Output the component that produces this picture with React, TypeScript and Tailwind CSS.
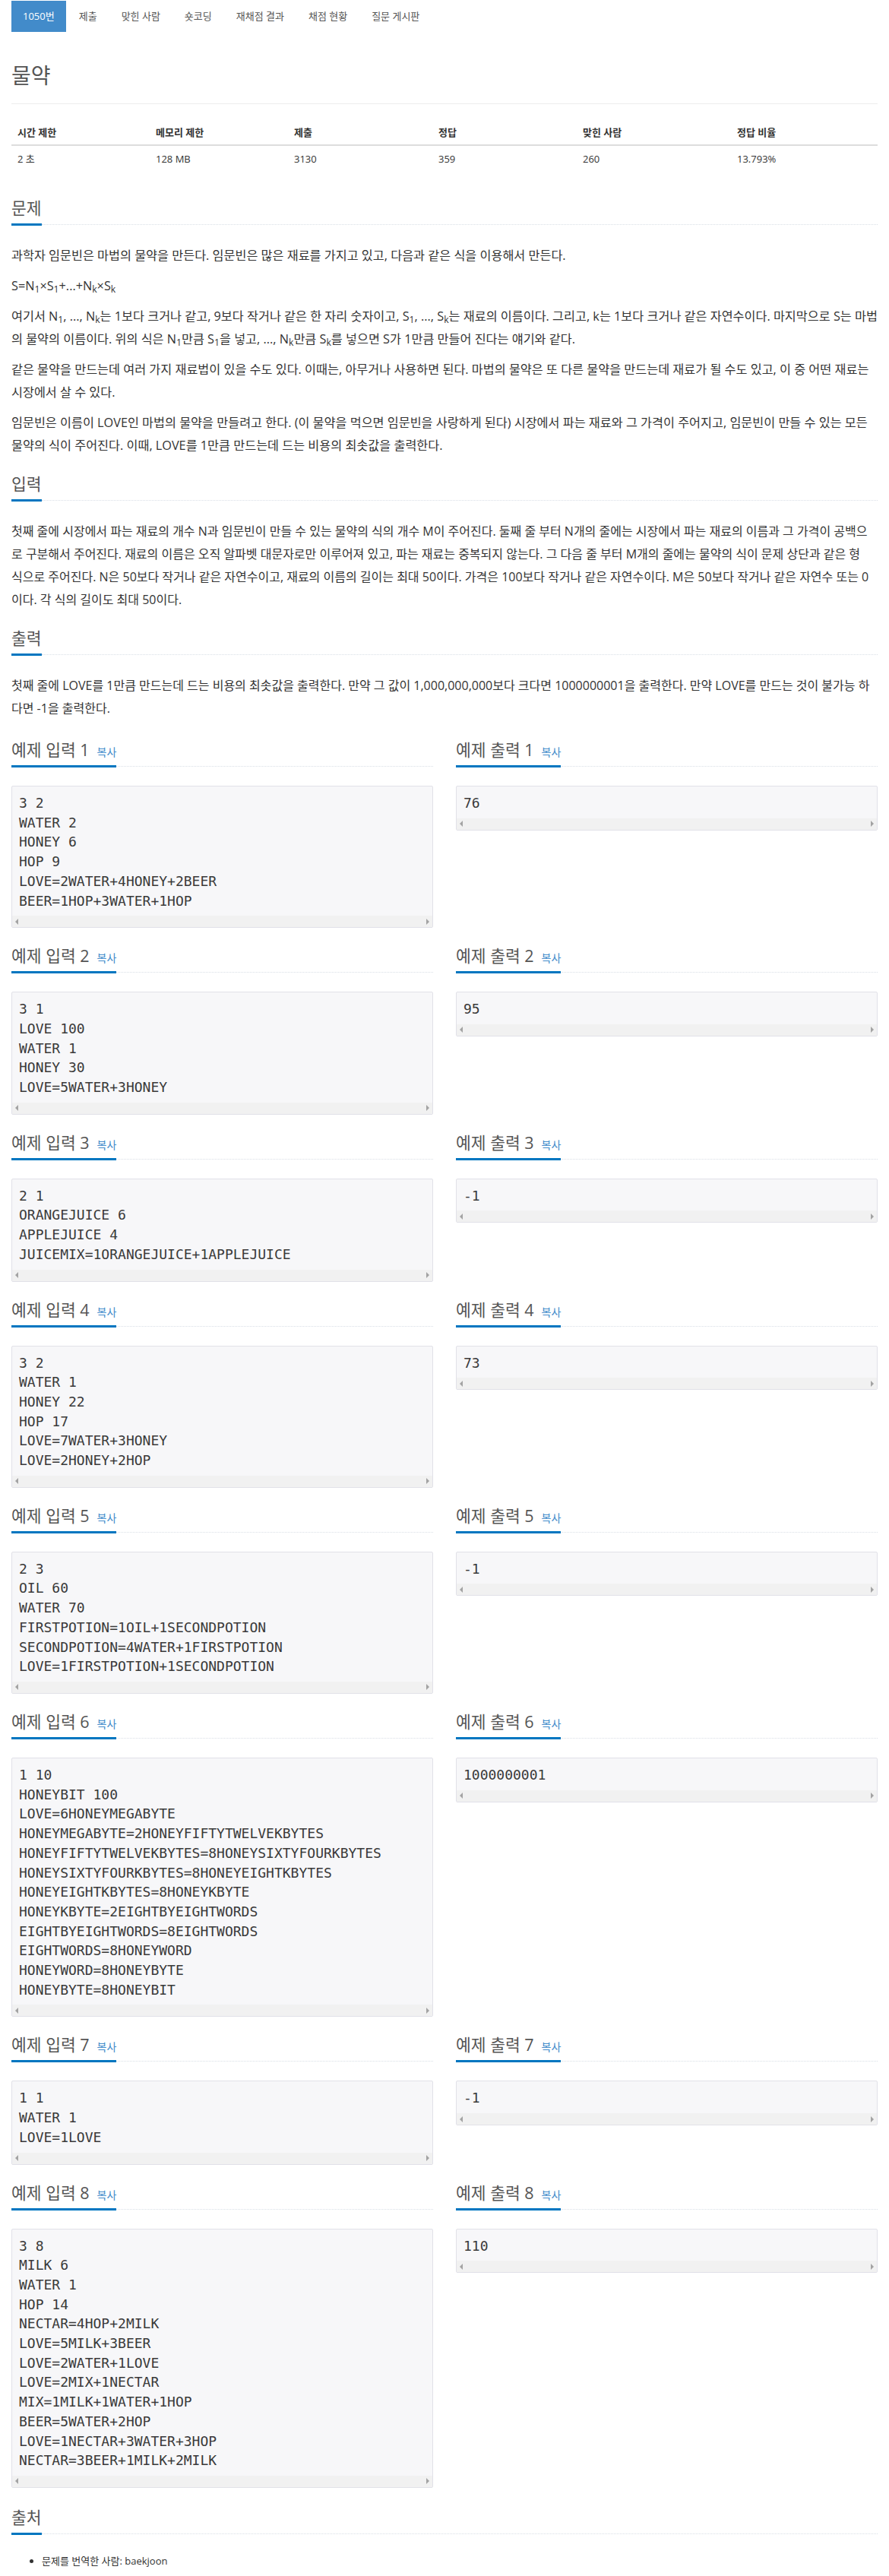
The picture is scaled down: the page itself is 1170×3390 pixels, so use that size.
import React from 'react';

const tabs = ['1050번', '제출', '맞힌 사람', '숏코딩', '재채점 결과', '채점 현황', '질문 게시판'];

const info = [
  { label: '시간 제한', value: '2 초', w: 'w-[182px]' },
  { label: '메모리 제한', value: '128 MB', w: 'w-[182px]' },
  { label: '제출', value: '3130', w: 'w-[190px]' },
  { label: '정답', value: '359', w: 'w-[190px]' },
  { label: '맞힌 사람', value: '260', w: 'w-[203px]' },
  { label: '정답 비율', value: '13.793%', w: '' },
];

const samples = [
  {
    input: '3 2\nWATER 2\nHONEY 6\nHOP 9\nLOVE=2WATER+4HONEY+2BEER\nBEER=1HOP+3WATER+1HOP',
    output: '76',
  },
  {
    input: '3 1\nLOVE 100\nWATER 1\nHONEY 30\nLOVE=5WATER+3HONEY',
    output: '95',
  },
  {
    input: '2 1\nORANGEJUICE 6\nAPPLEJUICE 4\nJUICEMIX=1ORANGEJUICE+1APPLEJUICE',
    output: '-1',
  },
  {
    input: '3 2\nWATER 1\nHONEY 22\nHOP 17\nLOVE=7WATER+3HONEY\nLOVE=2HONEY+2HOP',
    output: '73',
  },
  {
    input:
      '2 3\nOIL 60\nWATER 70\nFIRSTPOTION=1OIL+1SECONDPOTION\nSECONDPOTION=4WATER+1FIRSTPOTION\nLOVE=1FIRSTPOTION+1SECONDPOTION',
    output: '-1',
  },
  {
    input:
      '1 10\nHONEYBIT 100\nLOVE=6HONEYMEGABYTE\nHONEYMEGABYTE=2HONEYFIFTYTWELVEKBYTES\nHONEYFIFTYTWELVEKBYTES=8HONEYSIXTYFOURKBYTES\nHONEYSIXTYFOURKBYTES=8HONEYEIGHTKBYTES\nHONEYEIGHTKBYTES=8HONEYKBYTE\nHONEYKBYTE=2EIGHTBYEIGHTWORDS\nEIGHTBYEIGHTWORDS=8EIGHTWORDS\nEIGHTWORDS=8HONEYWORD\nHONEYWORD=8HONEYBYTE\nHONEYBYTE=8HONEYBIT',
    output: '1000000001',
  },
  {
    input: '1 1\nWATER 1\nLOVE=1LOVE',
    output: '-1',
  },
  {
    input:
      '3 8\nMILK 6\nWATER 1\nHOP 14\nNECTAR=4HOP+2MILK\nLOVE=5MILK+3BEER\nLOVE=2WATER+1LOVE\nLOVE=2MIX+1NECTAR\nMIX=1MILK+1WATER+1HOP\nBEER=5WATER+2HOP\nLOVE=1NECTAR+3WATER+3HOP\nNECTAR=3BEER+1MILK+2MILK',
    output: '110',
  },
];

function Headline({ children }: { children: React.ReactNode }) {
  return (
    <div className="flex items-end mb-[24px]">
      <h2 className="text-[21.5px] leading-[22px] pb-[9px] border-b-[3px] border-[#0076c0] font-normal text-[#555] whitespace-nowrap">
        {children}
      </h2>
      <div className="flex-1 border-b border-dotted border-[#d9dfe6] mb-[1px]" />
    </div>
  );
}

function SampleBox({ text }: { text: string }) {
  return (
    <div className="border border-[#e1e1e8] bg-[#f7f7f9] rounded-[2px] overflow-hidden">
      <pre className="pt-[9px] pb-[7px] px-[9px] text-[18px] leading-[25.7px] text-[#3a3a3a] font-['DejaVu_Sans_Mono',monospace] whitespace-pre overflow-hidden">
        {text}
      </pre>
      {/* fake horizontal scrollbar */}
      <div className="h-[15px] bg-[#f1f1f1] flex items-center justify-between px-[4px]">
        <span className="w-0 h-0 border-y-[4px] border-y-transparent border-r-[4px] border-r-[#a3a3a3]" />
        <span className="w-0 h-0 border-y-[4px] border-y-transparent border-l-[4px] border-l-[#a3a3a3]" />
      </div>
    </div>
  );
}

export default function App() {
  return (
    <div className="w-[1170px] px-[15px] bg-white text-[#333] font-['Open_Sans','Noto_Sans_CJK_KR',sans-serif]">
      {/* tabs */}
      <ul className="flex gap-[2px] mt-[1px]">
        {tabs.map((t, i) => (
          <li
            key={t}
            className={`px-[15px] h-[41px] leading-[41px] text-[13px] ${
              i === 0 ? 'bg-[#428bca] text-white' : 'text-[#555]'
            }`}
          >
            {t}
          </li>
        ))}
      </ul>

      {/* title */}
      <div className="mt-[42px] pb-[21px] border-b border-[#eee]">
        <h1 className="text-[28px] leading-[31px] font-normal text-[#555]">물약</h1>
      </div>

      {/* problem info */}
      <table className="w-full table-fixed mt-[20px] text-[13px] leading-[20px] border-collapse">
        <thead>
          <tr>
            {info.map((c) => (
              <th key={c.label} className={`${c.w} px-[8px] py-[6.5px] text-left font-bold border-b-2 border-[#ddd]`}>
                {c.label}
              </th>
            ))}
          </tr>
        </thead>
        <tbody>
          <tr>
            {info.map((c) => (
              <td key={c.label} className="px-[8px] py-[6.5px]">
                {c.value}
              </td>
            ))}
          </tr>
        </tbody>
      </table>

      {/* 문제 */}
      <section className="mt-[38px] pb-[15px]">
        <Headline>문제</Headline>
        <div className="text-[16.25px] leading-[30px]">
          <p className="mb-[10px]">
            과학자 임문빈은 마법의 물약을 만든다. 임문빈은 많은 재료를 가지고 있고, 다음과 같은 식을 이용해서 만든다.
          </p>
          <p className="mb-[10px]">
            S=N<sub>1</sub>×S<sub>1</sub>+...+N<sub>k</sub>×S<sub>k</sub>
          </p>
          <p className="mb-[10px]">
            여기서 N<sub>1</sub>, ..., N<sub>k</sub>는 1보다 크거나 같고, 9보다 작거나 같은 한 자리 숫자이고, S
            <sub>1</sub>, ..., S<sub>k</sub>는 재료의 이름이다. 그리고, k는 1보다 크거나 같은 자연수이다. 마지막으로
            S는 마법의 물약의 이름이다. 위의 식은 N<sub>1</sub>만큼 S<sub>1</sub>을 넣고, ..., N<sub>k</sub>만큼 S
            <sub>k</sub>를 넣으면 S가 1만큼 만들어 진다는 얘기와 같다.
          </p>
          <p className="mb-[10px]">
            같은 물약을 만드는데 여러 가지 재료법이 있을 수도 있다. 이때는, 아무거나 사용하면 된다. 마법의 물약은 또
            다른 물약을 만드는데 재료가 될 수도 있고, 이 중 어떤 재료는 시장에서 살 수 있다.
          </p>
          <p className="mb-[10px]">
            임문빈은 이름이 LOVE인 마법의 물약을 만들려고 한다. (이 물약을 먹으면 임문빈을 사랑하게 된다) 시장에서 파는
            재료와 그 가격이 주어지고, 임문빈이 만들 수 있는 모든 물약의 식이 주어진다. 이때, LOVE를 1만큼 만드는데
            드는 비용의 최솟값을 출력한다.
          </p>
        </div>
      </section>

      {/* 입력 */}
      <section className="pb-[15px]">
        <Headline>입력</Headline>
        <p className="text-[16px] leading-[30px] mb-[10px]">
          첫째 줄에 시장에서 파는 재료의 개수 N과 임문빈이 만들 수 있는 물약의 식의 개수 M이 주어진다. 둘째 줄 부터
          N개의 줄에는 시장에서 파는 재료의 이름과 그 가격이 공백으로 구분해서 주어진다. 재료의 이름은 오직 알파벳
          대문자로만 이루어져 있고, 파는 재료는 중복되지 않는다. 그 다음 줄 부터 M개의 줄에는 물약의 식이 문제 상단과
          같은 형<br />식으로 주어진다. N은 50보다 작거나 같은 자연수이고, 재료의 이름의 길이는 최대 50이다. 가격은
          100보다 작거나 같은 자연수이다. M은 50보다 작거나 같은 자연수 또는 0<br />이다. 각 식의 길이도 최대 50이다.
        </p>
      </section>

      {/* 출력 */}
      <section className="pb-[19px]">
        <Headline>출력</Headline>
        <p className="text-[16px] leading-[30px] mb-[10px]">
          첫째 줄에 LOVE를 1만큼 만드는데 드는 비용의 최솟값을 출력한다. 만약 그 값이 1,000,000,000보다 크다면
          1000000001을 출력한다. 만약 LOVE를 만드는 것이 불가능 하다면 -1을 출력한다.
        </p>
      </section>

      {/* samples */}
      <div className="grid grid-cols-2 gap-x-[30px] gap-y-[26px] items-start">
        {samples.map((s, i) => (
          <React.Fragment key={i}>
            <div>
              <Headline>
                예제 입력 {i + 1}
                <span className="ml-[10px] text-[14px] leading-none text-[#428bca]">복사</span>
              </Headline>
              <SampleBox text={s.input} />
            </div>
            <div>
              <Headline>
                예제 출력 {i + 1}
                <span className="ml-[10px] text-[14px] leading-none text-[#428bca]">복사</span>
              </Headline>
              <SampleBox text={s.output} />
            </div>
          </React.Fragment>
        ))}
      </div>

      {/* 출처 */}
      <section className="mt-[28px] pb-[12px]">
        <Headline>출처</Headline>
        <ul className="list-disc pl-[40px] text-[13px] leading-[20px]">
          <li>문제를 번역한 사람: baekjoon</li>
        </ul>
      </section>
    </div>
  );
}
